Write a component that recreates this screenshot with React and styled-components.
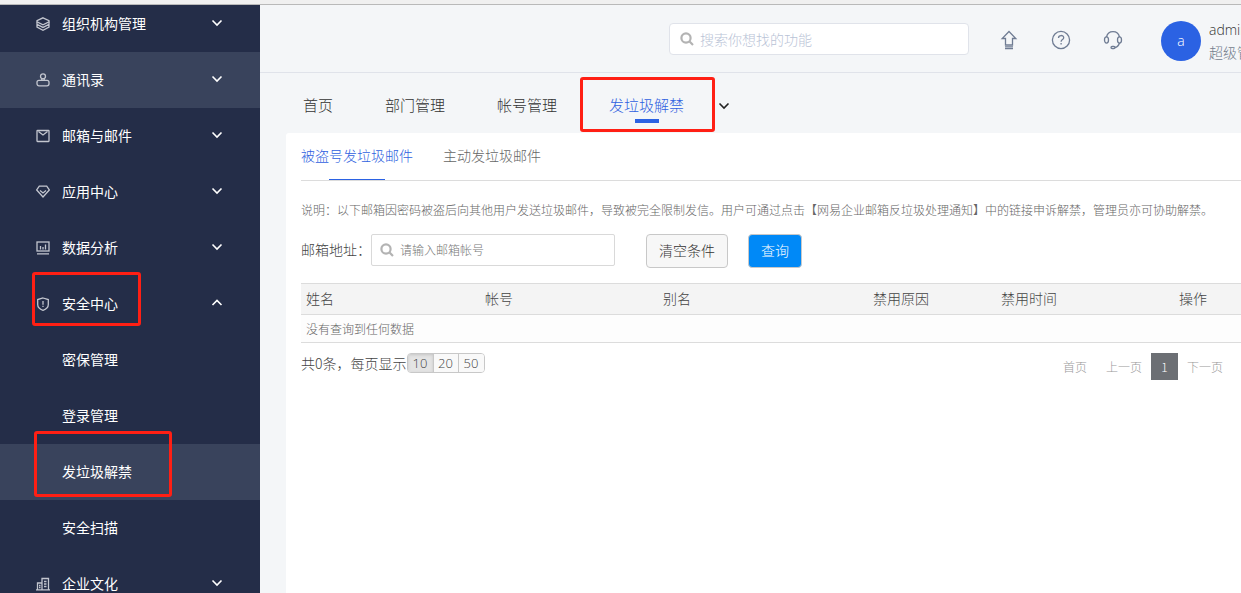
import React from "react";
import styled, { createGlobalStyle, css } from "styled-components";

const GlobalStyle = createGlobalStyle`
  *, *::before, *::after { box-sizing: border-box; }
  body {
    margin: 0;
    overflow: hidden;
    background: #f4f6f8;
    color: #444;
    font-family: "Noto Sans CJK SC", "Noto Sans", sans-serif;
    font-size: 14px;
    font-weight: 300;
    line-height: 20px;
  }
  button, input { font: inherit; color: inherit; }
  a { color: inherit; text-decoration: none; }
`;

const latin = css`
  font-family: "Open Sans", "Noto Sans CJK SC", sans-serif;
`;

const Page = styled.div`
  display: flex;
  flex-direction: column;
  height: 100vh;
`;

const WindowEdge = styled.div`
  flex: none;
  height: 5px;
  background: #f0f0f0;
  border-bottom: 1px solid #b9b9b9;
`;

const Shell = styled.div`
  display: grid;
  grid-template-columns: 260px minmax(0, 1fr);
  flex: 1;
  min-height: 0;
`;

const Sidebar = styled.nav`
  background: #242d48;
  overflow: hidden;
`;

const Menu = styled.ul`
  list-style: none;
  margin: -9px 0 0;
  padding: 0;
`;

const MenuLink = styled.a`
  position: relative;
  display: flex;
  align-items: center;
  height: 56px;
  padding: 0 37px 2px 36px;
  color: #fff;
  font-weight: 400;
  background: ${(p) => (p.$active ? "#39435c" : "transparent")};
  ${(p) => p.$child && css`padding-left: 62px;`}
`;

const MenuIcon = styled.svg`
  flex: none;
  width: 14px;
  height: 14px;
  margin: 2px 12px 0 0;
  fill: none;
  stroke: #c3c6cf;
  stroke-width: 1.3;
`;

const MenuLabel = styled.span`
  flex: 1;
`;

const Chevron = styled.svg`
  flex: none;
  width: 12px;
  height: 12px;
  fill: none;
  stroke: ${(p) => p.$color || "#fff"};
  stroke-width: 1.6;
`;

const Marker = styled.span`
  position: absolute;
  top: ${(p) => p.$top}px;
  left: ${(p) => p.$left}px;
  width: ${(p) => p.$width}px;
  height: ${(p) => p.$height}px;
  z-index: 1;
  border: 3px solid #ff1f14;
  border-radius: 3px;
  pointer-events: none;
`;

const Main = styled.div`
  display: flex;
  flex-direction: column;
  min-width: 0;
`;

const Header = styled.header`
  display: flex;
  align-items: center;
  justify-content: flex-end;
  flex: none;
  height: 68px;
  border-bottom: 1px solid #e0e3ea;
`;

const SearchBox = styled.label`
  display: flex;
  align-items: center;
  gap: 6px;
  width: ${(p) => p.$width}px;
  height: 32px;
  padding: 0 ${(p) => p.$pad}px;
  background: #fff;
  border: 1px solid ${(p) => p.$border};
  border-radius: ${(p) => p.$radius}px;
`;

const SearchInput = styled.input`
  flex: 1;
  min-width: 0;
  padding: 0;
  border: 0;
  outline: 0;
  background: none;
  font-size: ${(p) => p.$size}px;
  &::placeholder { color: ${(p) => p.$hint}; opacity: 1; }
`;

const SearchIcon = styled.svg`
  flex: none;
  width: 14px;
  height: 14px;
  fill: none;
  stroke: #b3b3b3;
  stroke-width: 2.2;
`;

const Tools = styled.div`
  display: flex;
  gap: 32px;
  margin: 0 38px 0 30px;
  padding-top: 2px;
`;

const ToolButton = styled.button`
  width: 20px;
  height: 20px;
  padding: 0;
  border: 0;
  background: none;
  svg {
    display: block;
    width: 20px;
    height: 20px;
    fill: none;
    stroke: #6f7c93;
    stroke-width: 1.3;
  }
`;

const Account = styled.div`
  display: flex;
  align-items: center;
  gap: 8px;
  padding-top: 4px;
`;

const Avatar = styled.span`
  ${latin}
  flex: none;
  width: 40px;
  height: 40px;
  border-radius: 50%;
  background: #2b62e3;
  color: #fff;
  text-align: center;
  line-height: 40px;
`;

const User = styled.div`
  width: 32px;
  overflow: hidden;
  white-space: nowrap;
  line-height: 22px;
`;

const UserName = styled.div`
  ${latin}
  color: #333;
`;

const UserRole = styled.div`
  color: #737d8c;
`;

const TabBar = styled.nav`
  display: flex;
  align-items: center;
  flex: none;
  height: 60px;
  padding: 4px 0 0 43px;
  font-size: 15px;
`;

const Tab = styled.a`
  position: relative;
  margin-right: ${(p) => (p.$active ? 34 : 52)}px;
  line-height: 34px;
  color: ${(p) => (p.$active ? "#2f5fe0" : "#333")};
  ${(p) =>
    p.$active &&
    css`
      &::after {
        content: "";
        position: absolute;
        left: 26px;
        bottom: -1px;
        width: 24px;
        height: 4px;
        background: #2b62e3;
      }
    `}
`;

const MoreTabs = styled.button`
  display: flex;
  padding: 2px 0 0;
  border: 0;
  background: none;
`;

const Panel = styled.main`
  flex: 1;
  margin-left: 26px;
  padding-left: 15px;
  background: #fff;
  border-radius: 3px 0 0 0;
`;

const SubTabs = styled.div`
  display: flex;
  gap: 30px;
  height: 48px;
  border-bottom: 1px solid #dcdcdc;
`;

const SubTab = styled.a`
  position: relative;
  line-height: 44px;
  color: ${(p) => (p.$active ? "#2f5fe0" : "#666")};
  ${(p) =>
    p.$active &&
    css`
      &::after {
        content: "";
        position: absolute;
        left: 28px;
        right: 28px;
        bottom: 0;
        height: 1px;
        background: #2b62e3;
      }
    `}
`;

const Note = styled.p`
  margin: 19px 0 14px;
  color: #666;
  font-size: 12px;
  white-space: nowrap;
`;

const Filter = styled.form`
  display: flex;
  align-items: flex-start;
  margin-bottom: 15px;
`;

const FilterLabel = styled.label`
  width: 70px;
  line-height: 30px;
`;

const Button = styled.button`
  height: 34px;
  padding: 0 12px 2px;
  border: 1px solid #c8c8c8;
  border-radius: 4px;
  background: ${(p) => (p.$primary ? "#0089f7" : "#f7f7f7")};
  color: ${(p) => (p.$primary ? "#fff" : "#333")};
  margin-left: ${(p) => (p.$primary ? 20 : 31)}px;
`;

const Table = styled.table`
  width: 100%;
  table-layout: fixed;
  border-collapse: separate;
  border-spacing: 0;
  border-top: 1px solid #dcdcdc;
`;

const HeadCell = styled.th`
  width: ${(p) => (p.$width ? `${p.$width}px` : "auto")};
  height: 31px;
  padding: 0 5px 2px;
  background: #f4f4f4;
  border-bottom: 1px solid #dcdcdc;
  font-weight: 300;
  text-align: left;
`;

const EmptyCell = styled.td`
  height: 28px;
  padding: 0 5px;
  background: #fdfdfd;
  border-bottom: 1px solid #dcdcdc;
  color: #666;
  font-size: 12px;
`;

const TableFooter = styled.div`
  display: flex;
  justify-content: space-between;
  align-items: flex-start;
  padding: 10px 18px 0 0;
`;

const PageSize = styled.div`
  display: flex;
  align-items: center;
`;

const SizeGroup = styled.div`
  display: flex;
  height: 20px;
  border: 1px solid #c8c8c8;
  border-radius: 4px;
  overflow: hidden;
`;

const SizeButton = styled.button`
  ${latin}
  width: 26px;
  padding: 0;
  border: 0;
  border-right: 1px solid #c8c8c8;
  background: ${(p) => (p.$active ? "#e4e4e4" : "#f9f9f9")};
  box-shadow: ${(p) => (p.$active ? "inset 0 1px 3px #c4c4c4" : "none")};
  font-size: 13px;
  line-height: 18px;
  &:nth-child(n + 2) { width: 25px; }
  &:last-child { border-right: 0; }
`;

const Pager = styled.nav`
  display: flex;
  color: #999;
  font-size: 12px;
  line-height: 27px;
`;

const PageLink = styled.a`
  margin-left: ${(p) => p.$gap}px;
`;

const CurrentPage = styled.span`
  width: 27px;
  margin-left: 9px;
  background: #6c6f74;
  color: #fff;
  text-align: center;
`;

const icons = {
  layers: (
    <>
      <path d="M7 .8 13 3.600v1.200L7 7.800 1 4.800V3.600z" />
      <path d="M1 4.800v2.600L7 10.400l6-3V4.800M1 7.400V10l6 3.200 6-3.200V7.400" />
    </>
  ),
  contact: (
    <>
      <circle cx="7" cy="3.300" r="2.500" />
      <rect x="1" y="7.300" width="12" height="5.500" rx="2" />
      <path d="M5.800 5.500V7.300M8.200 5.500V7.300" />
    </>
  ),
  mail: (
    <>
      <rect x="1" y="1.500" width="12" height="11" rx="0.500" />
      <path d="M2.500 2.500 7 6l4.500-3.500" />
    </>
  ),
  diamond: (
    <>
      <path d="M3.300 1.200h7.400L13.300 5 7 12 .7 5z" />
      <path d="M4 5.500 7 8l3-2.500" />
    </>
  ),
  chart: (
    <>
      <rect x="1" y="1" width="12" height="9" />
      <path d="M1 12.800h12M4.500 5v3.500M7 6v2.500M9.500 3.500v5" />
    </>
  ),
  shield: (
    <>
      <path d="M7 1 12.300 2.600v5C12.300 10.500 9.600 12.500 7 13.300 4.400 12.500 1.700 10.500 1.700 7.600v-5z" />
      <path d="M7 4v3.800M7 8.800v1.200" />
    </>
  ),
  building: (
    <path d="M0 12.800h14M1.500 12.500V6H6M6 12.500V1.500h6.500v11M3 8.500h1.500M3 10.500h1.500M8 4.500h2.500M8 7h2.500M8 9.500h2.500" />
  ),
};

const menu = [
  { label: "组织机构管理", icon: "layers" },
  { label: "通讯录", icon: "contact", active: true },
  { label: "邮箱与邮件", icon: "mail" },
  { label: "应用中心", icon: "diamond" },
  { label: "数据分析", icon: "chart" },
  { label: "安全中心", icon: "shield", open: true, marker: [-4, 32, 109, 54] },
  { label: "密保管理" },
  { label: "登录管理" },
  { label: "发垃圾解禁", active: true, marker: [-13, 34, 138, 66] },
  { label: "安全扫描" },
  { label: "企业文化", icon: "building" },
];

const columns = [
  ["姓名", 179],
  ["帐号", 178],
  ["别名", 210],
  ["禁用原因", 128],
  ["禁用时间", 178],
  ["操作", 0],
];

function Arrow({ up, color }) {
  return (
    <Chevron viewBox="0 0 12 12" $color={color} aria-hidden="true">
      <path d={up ? "M1.500 8 6 3.500 10.500 8" : "M1.500 3.500 6 8 10.500 3.500"} />
    </Chevron>
  );
}

function Magnifier() {
  return (
    <SearchIcon viewBox="0 0 14 14" aria-hidden="true">
      <circle cx="6" cy="6" r="4.600" />
      <path d="m9.300 9.300 3.700 3.700" />
    </SearchIcon>
  );
}

function MenuItem({ item }) {
  const [top, left, width, height] = item.marker || [];
  return (
    <li>
      <MenuLink href="#" $active={item.active} $child={!item.icon}>
        {item.icon && (
          <MenuIcon viewBox="0 0 14 14" aria-hidden="true">
            {icons[item.icon]}
          </MenuIcon>
        )}
        <MenuLabel>{item.label}</MenuLabel>
        {item.icon && <Arrow up={item.open} />}
        {item.marker && (
          <Marker $top={top} $left={left} $width={width} $height={height} />
        )}
      </MenuLink>
    </li>
  );
}

export default function App() {
  return (
    <Page lang="zh-CN">
      <GlobalStyle />
      <WindowEdge />
      <Shell>
        <Sidebar>
          <Menu>
            {menu.map((item) => (
              <MenuItem key={item.label} item={item} />
            ))}
          </Menu>
        </Sidebar>
        <Main>
          <Header>
            <SearchBox $width={300} $pad={10} $border="#e0e3ea" $radius={4}>
              <Magnifier />
              <SearchInput $size={14} $hint="#b9c3d6" aria-label="搜索" placeholder="搜索你想找的功能" />
            </SearchBox>
            <Tools>
              <ToolButton type="button" aria-label="上传">
                <svg viewBox="0 0 20 20">
                  <path d="M10 1.500 16.800 8.500h-3.300V15h-7V8.500H3.200zM6 16.800h8M6 18.600h8" />
                </svg>
              </ToolButton>
              <ToolButton type="button" aria-label="帮助">
                <svg viewBox="0 0 20 20">
                  <circle cx="10" cy="10" r="8.600" />
                  <path d="M7.500 8c0-3.300 5.200-3.200 5.200-.3 0 1.900-2.600 1.900-2.600 4.100M10.100 13v1.600" />
                </svg>
              </ToolButton>
              <ToolButton type="button" aria-label="客服">
                <svg viewBox="0 0 20 20">
                  <path d="M3.500 7C4.200 3.800 6.800 1.600 10 1.600S15.800 3.800 16.500 7M16.500 13c-.8 2.500-2.500 4.200-4.700 4.500" />
                  <ellipse cx="3.500" cy="10" rx="2" ry="3.100" />
                  <ellipse cx="16.500" cy="10" rx="2" ry="3.100" />
                  <rect x="8" y="16.300" width="4" height="2.200" rx="1.100" />
                </svg>
              </ToolButton>
            </Tools>
            <Account>
              <Avatar>a</Avatar>
              <User>
                <UserName>admin</UserName>
                <UserRole>超级管理员</UserRole>
              </User>
            </Account>
          </Header>
          <TabBar>
            <Tab href="#">首页</Tab>
            <Tab href="#">部门管理</Tab>
            <Tab href="#">帐号管理</Tab>
            <Tab href="#" $active>
              发垃圾解禁
              <Marker $top={-11} $left={-29} $width={135} $height={55} />
            </Tab>
            <MoreTabs type="button" aria-label="更多">
              <Arrow color="#222" />
            </MoreTabs>
          </TabBar>
          <Panel>
            <SubTabs>
              <SubTab href="#" $active>被盗号发垃圾邮件</SubTab>
              <SubTab href="#">主动发垃圾邮件</SubTab>
            </SubTabs>
            <Note>
              说明：以下邮箱因密码被盗后向其他用户发送垃圾邮件，导致被完全限制发信。用户可通过点击【网易企业邮箱反垃圾处理通知】中的链接申诉解禁，管理员亦可协助解禁。
            </Note>
            <Filter>
              <FilterLabel htmlFor="mail">邮箱地址：</FilterLabel>
              <SearchBox as="div" $width={244} $pad={8} $border="#d9d9d9" $radius={2}>
                <Magnifier />
                <SearchInput id="mail" $size={12} $hint="#777" placeholder="请输入邮箱帐号" />
              </SearchBox>
              <Button type="reset">清空条件</Button>
              <Button type="button" $primary>查询</Button>
            </Filter>
            <Table>
              <thead>
                <tr>
                  {columns.map(([name, width]) => (
                    <HeadCell key={name} $width={width}>{name}</HeadCell>
                  ))}
                </tr>
              </thead>
              <tbody>
                <tr>
                  <EmptyCell colSpan={columns.length}>没有查询到任何数据</EmptyCell>
                </tr>
              </tbody>
            </Table>
            <TableFooter>
              <PageSize>
                <span>共0条，每页显示</span>
                <SizeGroup>
                  <SizeButton type="button" $active>10</SizeButton>
                  <SizeButton type="button">20</SizeButton>
                  <SizeButton type="button">50</SizeButton>
                </SizeGroup>
              </PageSize>
              <Pager>
                <PageLink href="#">首页</PageLink>
                <PageLink href="#" $gap={19}>上一页</PageLink>
                <CurrentPage>1</CurrentPage>
                <PageLink href="#" $gap={9}>下一页</PageLink>
              </Pager>
            </TableFooter>
          </Panel>
        </Main>
      </Shell>
    </Page>
  );
}
